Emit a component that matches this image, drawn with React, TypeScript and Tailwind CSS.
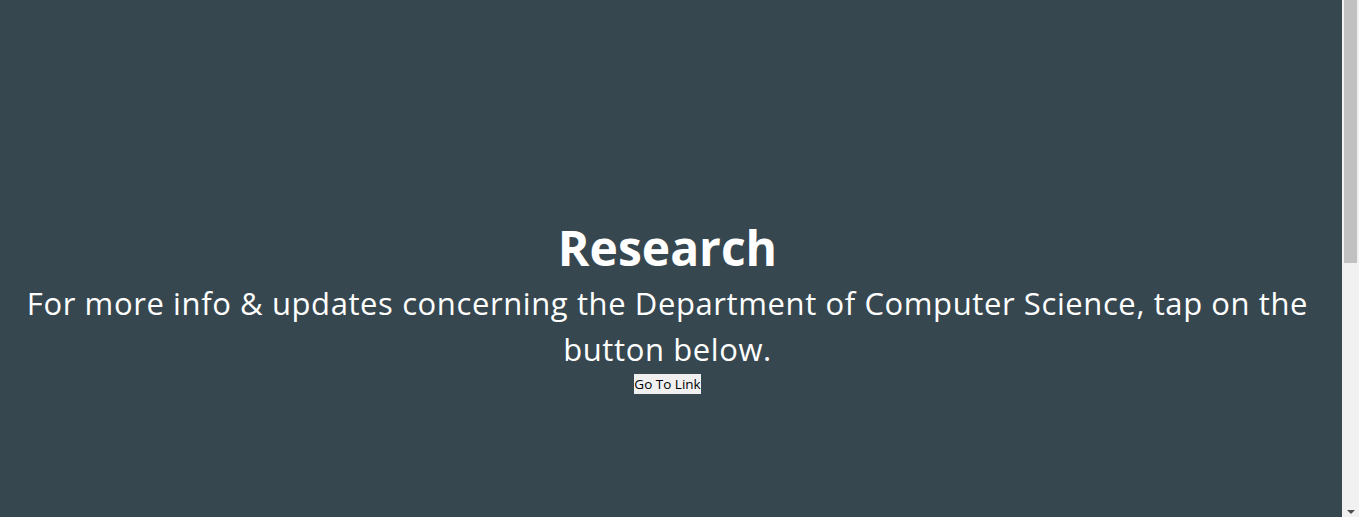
export default function App() {
  return (
    <div className="flex h-[517px] w-full overflow-hidden bg-[#37474f] font-['Open_Sans',sans-serif]">
      <main className="flex flex-1 flex-col items-center pr-[7px] pt-[220px] text-center text-white">
        <h1 className="text-[48px] leading-[56px] font-bold">Research</h1>
        <p className="mt-[4px] text-[31px] leading-[46px] tracking-[0.6px]">
          For more info &amp; updates concerning the Department of Computer Science, tap on the button below.
        </p>
        <button className="mt-[2px] h-[20px] w-[67px] whitespace-nowrap bg-[#f0f0f0] text-[13.5px] leading-[20px] text-black">
          Go To Link
        </button>
      </main>

      {/* scrollbar */}
      <aside className="flex w-[17px] flex-col items-center bg-[#f1f1f1]">
        <div className="h-[263px] w-[13px] bg-[#c1c1c1]" />
        <div className="flex-1" />
        <div className="mb-[3px] h-0 w-0 border-x-[4px] border-t-[4px] border-x-transparent border-t-[#505050]" />
      </aside>
    </div>
  );
}
